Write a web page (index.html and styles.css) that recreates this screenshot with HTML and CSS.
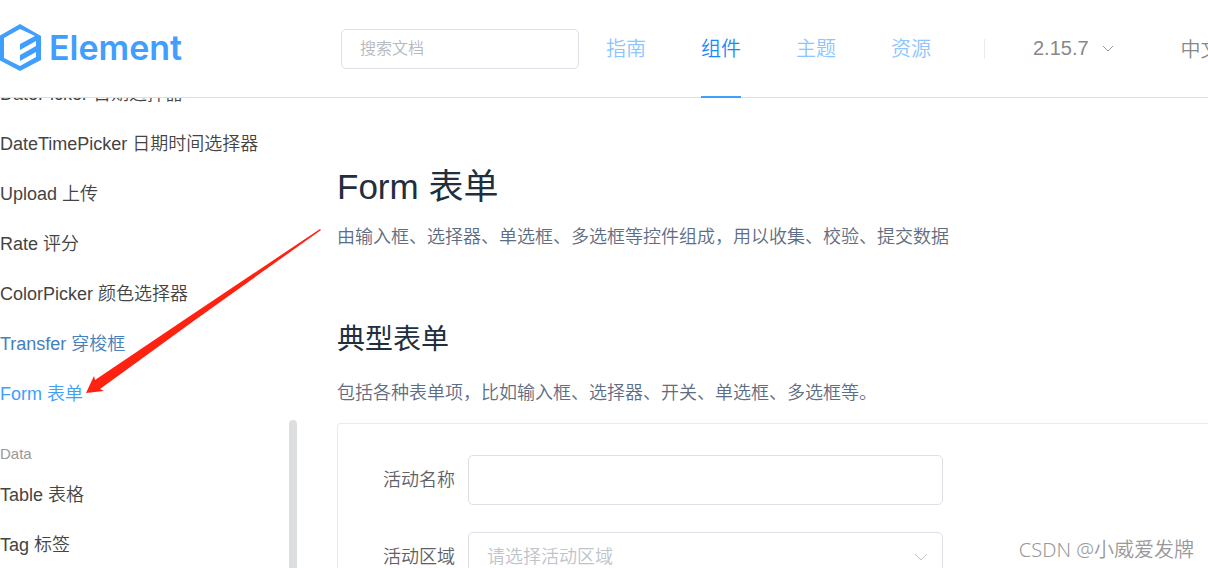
FILE: index.html
```html
<!DOCTYPE html>
<html lang="zh-CN">
<head>
<meta charset="utf-8">
<meta name="viewport" content="width=device-width, initial-scale=1">
<title>Form 表单 - Element</title>
<link rel="stylesheet" href="styles.css">
</head>
<body>
<header class="header">
  <a class="logo" href="#">
    <svg class="logo-mark" viewBox="0 0 42 48" aria-hidden="true">
      <path fill="#409eff" fill-rule="evenodd" d="M20 0 41 12V36L20 47-1 36V12ZM20 5 4 14V34L20 42 36 33V28L20 37V31L36 22V17L20 26V20L35 12Z"/>
    </svg>
    <span class="logo-word">Element</span>
  </a>
  <input class="search" type="search" placeholder="搜索文档" aria-label="搜索文档">
  <nav class="nav">
    <a class="nav-link" href="#">指南</a>
    <a class="nav-link active" href="#" aria-current="page">组件</a>
    <a class="nav-link" href="#">主题</a>
    <a class="nav-link" href="#">资源</a>
  </nav>
  <span class="divider"></span>
  <button class="version" type="button">2.15.7
    <svg class="chevron" viewBox="0 0 14 14" aria-hidden="true"><path d="M2 4 7 9 12 4"/></svg>
  </button>
  <button class="language" type="button">中文</button>
</header>
<div class="page">
  <aside class="sidebar">
    <nav class="menu">
      <a class="menu-link" href="#">DatePicker 日期选择器</a>
      <a class="menu-link" href="#">DateTimePicker 日期时间选择器</a>
      <a class="menu-link" href="#">Upload 上传</a>
      <a class="menu-link" href="#">Rate 评分</a>
      <a class="menu-link" href="#">ColorPicker 颜色选择器</a>
      <a class="menu-link visited" href="#">Transfer 穿梭框</a>
      <a class="menu-link current" href="#" aria-current="page">Form 表单</a>
      <h2 class="menu-group">Data</h2>
      <a class="menu-link" href="#">Table 表格</a>
      <a class="menu-link" href="#">Tag 标签</a>
    </nav>
    <div class="scroll-thumb"></div>
  </aside>
  <main class="content">
    <h1 class="title">Form 表单</h1>
    <p class="text">由输入框、选择器、单选框、多选框等控件组成，用以收集、校验、提交数据</p>
    <h2 class="subtitle">典型表单</h2>
    <p class="text">包括各种表单项，比如输入框、选择器、开关、单选框、多选框等。</p>
    <form class="demo">
      <div class="field">
        <label class="label" for="name">活动名称</label>
        <input class="control" id="name" type="text">
      </div>
      <div class="field">
        <label class="label" for="region">活动区域</label>
        <div class="select-wrap">
          <select class="control select" id="region"><option>请选择活动区域</option></select>
          <svg class="chevron select-arrow" viewBox="0 0 14 14" aria-hidden="true"><path d="M1 4 7 10 13 4"/></svg>
        </div>
      </div>
    </form>
  </main>
</div>
<svg class="arrow" viewBox="0 0 240 170" aria-hidden="true">
  <path fill="#ff2211" d="M235 1 109 91 14 160 18 162 0 164 8 147 9 151 98 91 234 0Z"/>
</svg>
<span class="watermark">CSDN @小威爱发牌</span>
</body>
</html>
```
FILE: styles.css
```css
* {
  box-sizing: border-box;
}

body {
  margin: 0;
  height: 100vh;
  display: flex;
  flex-direction: column;
  overflow: hidden;
  position: relative;
  background: #fff;
  font-family: "Liberation Sans", "Noto Sans CJK SC", sans-serif;
  font-size: 18px;
  font-weight: 350;
  color: #5e6d82;
}

a {
  text-decoration: none;
}

input,
select,
button {
  font: inherit;
}

.header {
  flex: none;
  display: flex;
  align-items: center;
  height: 98px;
  border-bottom: 1px solid #dcdfe6;
  white-space: nowrap;
}

.logo {
  flex: none;
  display: flex;
  align-items: center;
  gap: 7px;
  width: 341px;
  padding-bottom: 2px;
  color: #409eff;
}

.logo-mark {
  width: 42px;
  height: 48px;
}

.logo-word {
  font-family: Inter, "Liberation Sans", sans-serif;
  font-size: 34px;
  line-height: 48px;
  font-weight: 600;
}

.search {
  flex: none;
  width: 238px;
  height: 40px;
  padding: 0 18px;
  border: 1px solid #dcdfe6;
  border-radius: 5px;
  outline: none;
  font-size: 16px;
}

.search::placeholder {
  color: #b4b8c0;
}

.nav {
  flex: none;
  display: flex;
  align-self: stretch;
  gap: 55px;
  margin: 0 0 -1px 27px;
}

.nav-link {
  display: flex;
  align-items: center;
  padding-bottom: 2px;
  border-bottom: 2px solid transparent;
  color: #8cc5ff;
  font-size: 20px;
}

.nav-link.active {
  border-color: #409eff;
  color: #1989fa;
}

.divider {
  flex: none;
  width: 1px;
  height: 20px;
  margin: 0 48px 0 53px;
  background: #ebebeb;
}

.version,
.language {
  flex: none;
  display: flex;
  align-items: center;
  gap: 12px;
  padding: 0;
  border: 0;
  background: none;
  color: #888;
  font-size: 20px;
}

.language {
  margin-left: 66px;
}

.chevron {
  width: 14px;
  height: 14px;
  fill: none;
  stroke: #999;
}

.page {
  flex: 1;
  min-height: 0;
  display: flex;
  overflow: hidden;
}

.sidebar {
  flex: none;
  width: 297px;
  display: flex;
  justify-content: space-between;
  overflow: hidden;
}

.menu {
  margin-top: -29px;
}

.menu-link {
  display: block;
  line-height: 50px;
  color: #444;
  white-space: nowrap;
}

.menu-link.visited {
  color: #4480be;
}

.menu-link.current {
  color: #409eff;
}

.menu-group {
  margin: 19px 0 0;
  font-size: 15px;
  font-weight: 350;
  line-height: 32px;
  color: #999;
}

.scroll-thumb {
  width: 8px;
  margin-top: 322px;
  border-radius: 4px 4px 0 0;
  background: #dddee0;
}

.content {
  flex: 1;
  min-width: 0;
  padding: 65px 0 0 40px;
}

.title {
  margin: 0;
  font-size: 35px;
  line-height: 48px;
  font-weight: 400;
  color: #1f2f3d;
}

.subtitle {
  margin: 70px 0 20px;
  font-size: 28px;
  line-height: 40px;
  font-weight: 400;
  color: #1f2f3d;
}

.text {
  margin: 13px 0;
  line-height: 26px;
  white-space: nowrap;
}

.demo {
  margin-top: 17px;
  padding: 31px 45px;
  border: 1px solid #ebebeb;
  border-right: 0;
  border-radius: 4px 0 0 4px;
}

.field {
  display: flex;
  align-items: center;
  gap: 13px;
  margin-bottom: 27px;
}

.label {
  flex: none;
  width: 72px;
  padding-bottom: 4px;
  color: #606266;
}

.control {
  width: 475px;
  height: 50px;
  padding: 0 18px;
  border: 1px solid #dcdfe6;
  border-radius: 5px;
  background: #fff;
  outline: none;
}

.select-wrap {
  position: relative;
}

.select {
  display: block;
  appearance: none;
  color: #c0c4cc;
}

.select-arrow {
  position: absolute;
  top: 18px;
  right: 15px;
  stroke: #c0c4cc;
}

.arrow {
  position: absolute;
  top: 229px;
  left: 86px;
  width: 240px;
  height: 170px;
  pointer-events: none;
}

.watermark {
  position: absolute;
  right: 14px;
  bottom: 4px;
  font-family: "Noto Sans", "Noto Sans CJK SC", sans-serif;
  font-size: 20px;
  line-height: 28px;
  color: #999;
}
```
